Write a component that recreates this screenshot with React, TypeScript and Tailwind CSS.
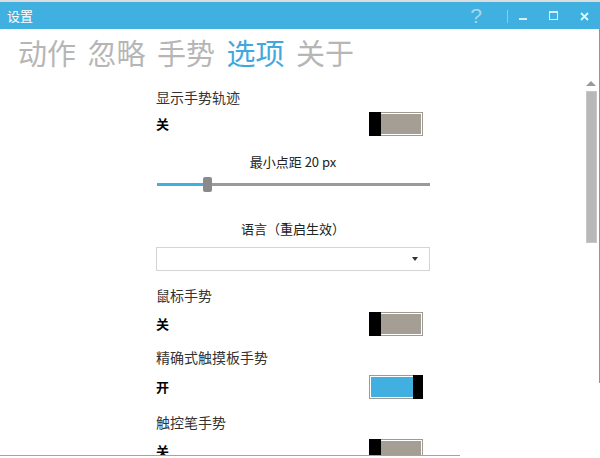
import React from "react";

const FONT = { fontFamily: '"Noto Sans CJK SC", "Noto Sans", sans-serif' };

function Toggle({ on }: { on: boolean }) {
  if (on) {
    return (
      <div className="flex h-[24px] w-[54px]">
        <div className="flex-1 border-y border-l border-[#a09a92] bg-white py-px pl-px">
          <div className="h-full w-full bg-[#41b0e0]" />
        </div>
        <div className="h-full w-[10px] bg-black" />
      </div>
    );
  }
  return (
    <div className="flex h-[24px] w-[54px]">
      <div className="h-full w-[12px] bg-black" />
      <div className="flex-1 border-y border-r border-[#a09a92] bg-white py-px pr-px">
        <div className="h-full w-full bg-[#a59e94]" />
      </div>
    </div>
  );
}

function ToggleRow({ on, className }: { on: boolean; className: string }) {
  return (
    <div className={`flex h-[24px] items-center justify-between ${className}`}>
      <span className="text-[13px] font-bold leading-[24px] text-black">{on ? "开" : "关"}</span>
      <div className="mr-[7px]">
        <Toggle on={on} />
      </div>
    </div>
  );
}

function Heading({ text, className }: { text: string; className: string }) {
  return <div className={`h-[20px] text-[14px] leading-[20px] text-[#333] ${className}`}>{text}</div>;
}

export default function App() {
  const tabs = ["动作", "忽略", "手势", "选项", "关于"];
  return (
    <div className="flex h-[458px] w-[600px] flex-col overflow-hidden bg-white" style={FONT}>
      <div className="h-[2px] bg-[#dcdcdc]" />
      <div className="flex h-[27px] items-start bg-[#40b0e0]">
        <span className="ml-[7px] mt-[5px] text-[13px] leading-[17px] text-white">设置</span>
        <div className="flex-1" />
        <div className="flex items-start pr-[11px]">
          <span
            className="mt-[2px] w-[14px] text-center text-[21px] font-light leading-[24px] text-[#a5d7f0]"
            style={{ fontFamily: '"Liberation Sans", sans-serif' }}
          >
            ?
          </span>
          <div className="ml-[24px] mt-[8px] h-[13px] w-px bg-[#86ccec]" />
          <div className="ml-[11px] mt-[16px] h-[2px] w-[8px] bg-[#d6eef9]" />
          <div className="ml-[22px] mt-[9px] h-[9px] w-[9px] border border-t-2 border-[#d6eef9]" />
          <svg className="ml-[22px] mt-[10px]" width="9" height="9" viewBox="0 0 9 9">
            <path d="M1 1 L8 8 M8 1 L1 8" stroke="#e4f4fb" strokeWidth="1.8" />
          </svg>
        </div>
      </div>
      <div className="flex h-[426px] overflow-hidden">
        <div className="flex w-[583px] flex-col">
          <div className="flex gap-[11.5px] pl-[18px] pt-[9px]">
            {tabs.map((t) => (
              <span
                key={t}
                className={`text-[29px] leading-[29px] ${t === "选项" ? "text-[#3fa9de]" : "text-[#b6b6b6]"}`}
              >
                {t}
              </span>
            ))}
          </div>
          <div className="ml-[156px] flex w-[274px] flex-col">
            <Heading text="显示手势轨迹" className="mt-[20px]" />
            <ToggleRow on={false} className="mt-[5px]" />
            <div className="mt-[16px] h-[20px] text-center text-[13px] leading-[20px] text-[#222]">最小点距 20 px</div>
            <div className="mt-[4px] flex h-[16px] items-center pl-px">
              <div className="h-[3px] w-[46px] bg-[#41b0e0]" />
              <div className="h-[15px] w-[9px] rounded-[2px] bg-[#8a8a8a]" />
              <div className="h-[3px] flex-1 bg-[#9a9a9a]" />
            </div>
            <div className="mt-[27px] h-[20px] text-center text-[13px] leading-[20px] text-[#222]">语言（重启生效）</div>
            <div className="mt-[8px] flex h-[24px] items-center justify-end border border-[#d4d4d4] pr-[11px]">
              <div className="h-0 w-0 border-x-[3px] border-t-[4px] border-x-transparent border-t-[#333]" />
            </div>
            <Heading text="鼠标手势" className="mt-[14px]" />
            <ToggleRow on={false} className="mt-[7px]" />
            <Heading text="精确式触摸板手势" className="mt-[11px]" />
            <ToggleRow on={true} className="mt-[8px]" />
            <Heading text="触控笔手势" className="mt-[13px]" />
            <ToggleRow on={false} className="mt-[7px]" />
          </div>
        </div>
        <div className="flex w-[16px] flex-col items-center">
          <div className="mt-[52px] h-0 w-0 border-x-[5px] border-b-[5px] border-x-transparent border-b-[#9a9a9a]" />
          <div className="mt-[5px] h-[152px] w-[11px] border border-[#c6c6c6] bg-[#b8b8b8]" />
        </div>
        <div className="w-px">
          <div className="h-[354px] w-px bg-[#40b0e0]" />
        </div>
      </div>
      <div className="h-px w-[460px] bg-[#5bbbe6]" />
    </div>
  );
}
